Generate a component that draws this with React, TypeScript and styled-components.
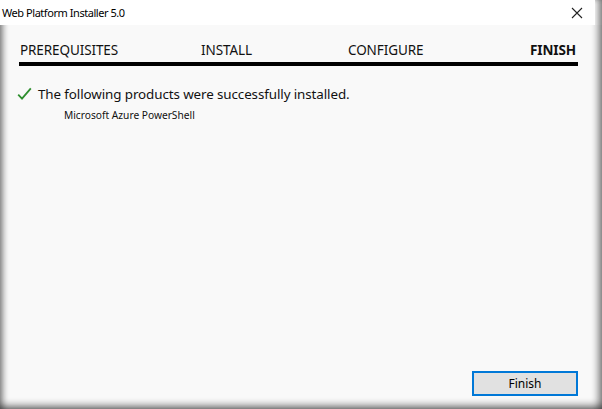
import React from 'react';
import styled, { createGlobalStyle } from 'styled-components';

const GlobalStyle = createGlobalStyle`
  html, body {
    margin: 0;
    padding: 0;
    background: #ffffff;
  }
  body {
    font-family: "Noto Sans", "Open Sans", "Liberation Sans", sans-serif;
    color: #1a1a1a;
  }
`;

const Frame = styled.div`
  width: 602px;
  height: 409px;
  box-sizing: border-box;
  display: flex;
  flex-direction: column;
  background: linear-gradient(#ffffff 0, #ffffff 25px, #f9f9f9 25px);
  box-shadow:
    inset 6px 0 6px -3px rgba(0, 0, 0, 0.45),
    inset -7px 0 7px -3px rgba(0, 0, 0, 0.45),
    inset 0 -7px 7px -3px rgba(0, 0, 0, 0.45);
  overflow: hidden;
`;

const TitleBar = styled.div`
  height: 25px;
  flex: none;
  display: flex;
  align-items: center;
  justify-content: space-between;
  padding: 0 12px 0 2px;
  background: #ffffff;
  position: relative;
  z-index: 1;
  margin-right: 7px;
`;

const Title = styled.span`
  font-size: 11px;
  letter-spacing: -0.45px;
  color: #000;
  margin-top: -1px;
`;

const CloseButton = styled.span`
  display: flex;
  width: 12px;
  height: 12px;
  margin-top: 1px;
`;

const Body = styled.div`
  flex: 1;
  display: flex;
  flex-direction: column;
  padding: 15px 24px 13px 19px;
`;

const Steps = styled.div`
  display: grid;
  grid-template-columns: 181px 147px 181px 1fr;
  padding: 0 2px 0 1px;
  border-bottom: 4px solid #000;
  height: 22px;
`;

const Step = styled.div<{ $active?: boolean; $right?: boolean }>`
  font-size: 13.5px;
  font-weight: ${p => (p.$active ? 700 : 400)};
  text-align: ${p => (p.$right ? 'right' : 'left')};
  color: #111;
  line-height: 20px;
  letter-spacing: -0.1px;
`;

const Result = styled.div`
  display: flex;
  align-items: center;
  gap: 6px;
  margin-top: 19px;
  margin-left: -2px;
`;

const Message = styled.span`
  font-size: 13.4px;
  color: #111;
  letter-spacing: -0.1px;
`;

const Product = styled.div`
  font-size: 10.2px;
  color: #111;
  margin: 5px 0 0 45px;
`;

const Spacer = styled.div`
  flex: 1;
`;

const Footer = styled.div`
  display: flex;
  justify-content: flex-end;
`;

const FinishButton = styled.button`
  width: 106px;
  height: 25px;
  box-sizing: border-box;
  background: #e1e1e1;
  border: 2px solid #0078d7;
  font-family: inherit;
  font-size: 12px;
  color: #000;
  padding: 0;
`;

const steps = ['PREREQUISITES', 'INSTALL', 'CONFIGURE', 'FINISH'];

const App = () => {
  return (
    <>
      <GlobalStyle />
      <Frame>
        <TitleBar>
          <Title>Web Platform Installer 5.0</Title>
          <CloseButton>
            <svg width="12" height="12" viewBox="0 0 12 12">
              <path d="M1 1 L11 11 M11 1 L1 11" stroke="#222" strokeWidth="1.1" />
            </svg>
          </CloseButton>
        </TitleBar>
        <Body>
          <Steps>
            {steps.map((s, i) => (
              <Step key={s} $active={i === 3} $right={i === 3}>
                {s}
              </Step>
            ))}
          </Steps>
          <Result>
            <svg width="15" height="14" viewBox="0 0 15 14">
              <path d="M1.2 7.6 L5 11.6 L13.8 1.4" fill="none" stroke="#2f8f2f" strokeWidth="1.8" />
            </svg>
            <Message>The following products were successfully installed.</Message>
          </Result>
          <Product>Microsoft Azure PowerShell</Product>
          <Spacer />
          <Footer>
            <FinishButton>Finish</FinishButton>
          </Footer>
        </Body>
      </Frame>
    </>
  );
};

export default App;
